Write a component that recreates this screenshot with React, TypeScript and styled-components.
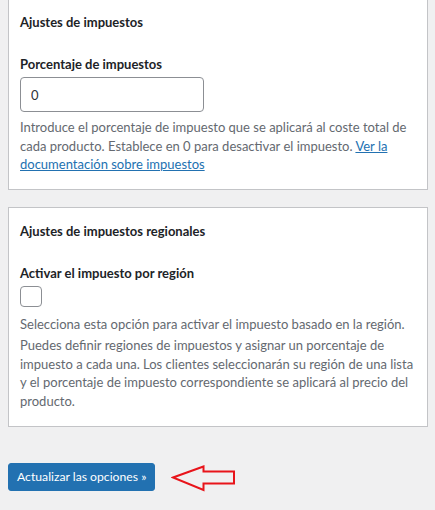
import React from "react";
import styled, { createGlobalStyle } from "styled-components";

const Global = createGlobalStyle`
  html, body { margin: 0; padding: 0; background: #f0f0f1; }
  body { font-family: Lato, "Noto Sans", sans-serif; color: #1d2327; }
`;

const Page = styled.div`
  width: 435px;
  height: 510px;
  overflow: hidden;
  box-sizing: border-box;
  padding: 0 7px 0 8px;
  display: flex;
  flex-direction: column;
`;

const Card = styled.section<{ $first?: boolean }>`
  background: #fff;
  border: 1px solid #c3c4c7;
  box-sizing: border-box;
  padding: 14px 11px 15px;
  margin-top: ${(p) => (p.$first ? "-2px" : "17px")};
  display: flex;
  flex-direction: column;
  align-items: flex-start;
`;

const Title = styled.h2`
  margin: 0 0 23px;
  font-size: 13px;
  font-weight: 700;
  line-height: 19px;
  color: #1d2327;
`;

const Label = styled.label`
  font-size: 13px;
  font-weight: 700;
  line-height: 19px;
  color: #1d2327;
  margin-bottom: 3px;
`;

const TextInput = styled.input`
  width: 184px;
  height: 35px;
  box-sizing: border-box;
  border: 1px solid #8c8f94;
  border-radius: 4px;
  padding: 0 10px;
  font-family: inherit;
  font-size: 13px;
  color: #2c3338;
  background: #fff;
  margin: 0 0 6px;
  outline: none;
`;

const Checkbox = styled.span`
  display: block;
  width: 22px;
  height: 21px;
  box-sizing: border-box;
  border: 1px solid #8c8f94;
  border-radius: 4px;
  background: #fff;
  margin-bottom: 8px;
`;

const Description = styled.p<{ $gap?: number }>`
  margin: 0 0 ${(p) => p.$gap ?? 0}px;
  font-size: 13px;
  line-height: 18.7px;
  color: #646970;
`;

const DocLink = styled.a`
  color: #2271b1;
  text-decoration: underline;
`;

const Actions = styled.div`
  display: flex;
  align-items: center;
  gap: 16px;
  margin-top: 35px;
`;

const Button = styled.button`
  height: 28px;
  padding: 0 8px;
  background: #2271b1;
  border: 1px solid #2271b1;
  border-radius: 3px;
  color: #fff;
  font-family: inherit;
  font-size: 12.2px;
  line-height: 26px;
  cursor: pointer;
`;

const ArrowSvg = styled.svg`
  margin-top: 3px;
  display: block;
`;

const Arrow = () => (
  <ArrowSvg width="66" height="27" viewBox="0 0 66 27">
    <polygon
      points="2,12.5 32.5,1.5 32.5,6.5 63,6.5 63,18.5 32.5,18.5 32.5,25"
      fill="none"
      stroke="#e8141b"
      strokeWidth="2"
    />
  </ArrowSvg>
);

export default function App() {
  return (
    <>
      <Global />
      <Page>
        <Card $first>
          <Title>Ajustes de impuestos</Title>
          <Label htmlFor="tax">Porcentaje de impuestos</Label>
          <TextInput id="tax" defaultValue="0" />
          <Description>
            Introduce el porcentaje de impuesto que se aplicará al coste total de cada producto. Establece en 0 para desactivar el impuesto.{" "}
            <DocLink href="#">Ver la documentación sobre impuestos</DocLink>
          </Description>
        </Card>
        <Card>
          <Title>Ajustes de impuestos regionales</Title>
          <Label>Activar el impuesto por región</Label>
          <Checkbox />
          <Description $gap={2}>Selecciona esta opción para activar el impuesto basado en la región.</Description>
          <Description>
            Puedes definir regiones de impuestos y asignar un porcentaje de impuesto a cada una. Los clientes seleccionarán su región de una lista y el porcentaje de impuesto correspondiente se aplicará al precio del producto.
          </Description>
        </Card>
        <Actions>
          <Button>Actualizar las opciones »</Button>
          <Arrow />
        </Actions>
      </Page>
    </>
  );
}
